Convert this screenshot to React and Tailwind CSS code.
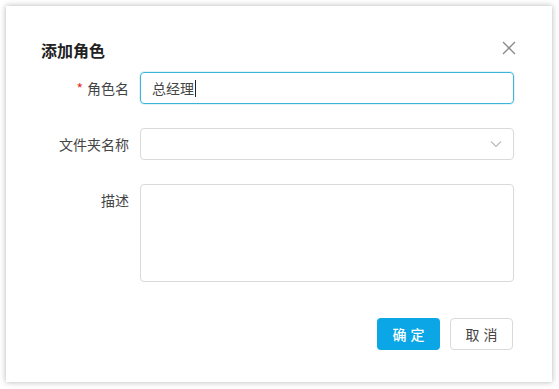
export default function App() {
  const font = { fontFamily: '"Noto Sans CJK SC", "Noto Sans", sans-serif' };
  return (
    <div className="w-[559px] h-[389px] bg-white p-[6px]" style={font}>
      <div className="w-[546px] h-[376px] bg-white shadow-[0_0_6px_rgba(0,0,0,0.3)] flex flex-col">
        <div className="flex items-center justify-between pl-[35px] pr-[36px] pt-[31px] h-[66px] pb-[10px]">
          <div className="text-[16px] font-bold text-[#222] leading-[24px]">添加角色</div>
          <svg width="14" height="14" viewBox="0 0 14 14" className="mt-[-4px]">
            <path d="M1 1L13 13M13 1L1 13" stroke="#888" strokeWidth="1.3" fill="none" />
          </svg>
        </div>
        <div className="flex flex-col pr-[38px]">
          <div className="flex items-center h-[32px]">
            <div className="w-[134px] shrink-0 pr-[11px] text-right text-[14px] text-[#444]">
              <span className="text-[#e0301e] mr-[4px]">*</span>角色名
            </div>
            <div className="flex-1 h-[32px] border border-[#3ab4d9] rounded-[4px] flex items-center px-[11px] text-[14px] text-[#444] shadow-[0_0_0_1px_rgba(58,180,217,0.15)]">
              总经理<span className="w-px h-[17px] bg-[#222] ml-px"></span>
            </div>
          </div>
          <div className="flex items-center h-[32px] mt-[24px]">
            <div className="w-[134px] shrink-0 pr-[11px] text-right text-[14px] text-[#444]">文件夹名称</div>
            <div className="flex-1 h-[32px] border border-[#d9d9d9] rounded-[4px] flex items-center justify-end pr-[11px]">
              <svg width="12" height="8" viewBox="0 0 12 8">
                <path d="M1 1.5L6 6.5L11 1.5" stroke="#bbb" strokeWidth="1.2" fill="none" />
              </svg>
            </div>
          </div>
          <div className="flex items-start mt-[24px]">
            <div className="w-[134px] shrink-0 pr-[11px] text-right text-[14px] text-[#444] pt-[6px]">描述</div>
            <div className="flex-1 h-[98px] border border-[#d9d9d9] rounded-[4px]"></div>
          </div>
        </div>
        <div className="flex justify-end gap-[10px] pr-[39px] mt-[36px]">
          <button className="w-[63px] h-[32px] rounded-[4px] bg-[#0ba6e6] text-white text-[14px] tracking-[4px] pl-[4px] font-medium">确定</button>
          <button className="w-[63px] h-[32px] rounded-[4px] border border-[#d9d9d9] bg-white text-[#444] text-[14px] tracking-[4px] pl-[4px]">取消</button>
        </div>
      </div>
    </div>
  );
}
